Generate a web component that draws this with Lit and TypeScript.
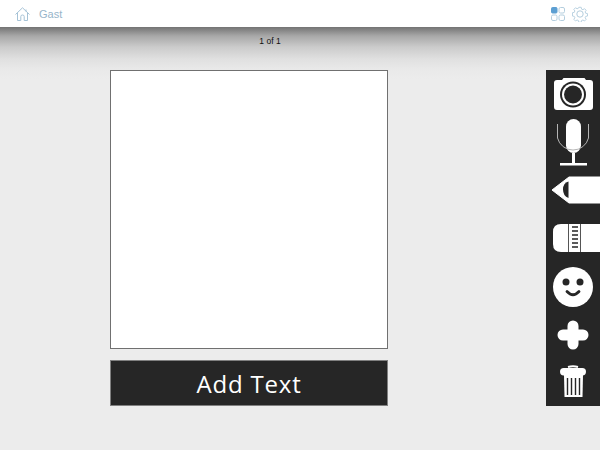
import { LitElement, html, css } from "lit";
import { customElement } from "lit/decorators.js";

@customElement("app-root")
export class AppRoot extends LitElement {
  static styles = css`
    :host { display: block; width: 600px; height: 450px; overflow: hidden; font-family: "Liberation Sans", Arial, sans-serif; }
    .page { width: 600px; height: 450px; display: flex; flex-direction: column; background: #ececec; }
    .header { height: 27px; flex: none; background: #fff; display: flex; align-items: center; padding: 0 12px 0 15px; box-sizing: border-box; }
    .header svg { display: block; flex: none; }
    .user { margin-left: 9px; font-size: 11px; color: #97b5ca; }
    .right { margin-left: auto; display: flex; gap: 7px; align-items: center; }
    .stage { flex: 1; background: linear-gradient(to bottom, #737373 0, #a8a8a8 9px, #cbcbcb 20px, #e0e0e0 32px, #e9e9e9 42px, #ececec 52px); }
    .count { width: 540px; height: 43px; box-sizing: border-box; padding-top: 9px; text-align: center; font-size: 8.5px; line-height: 11px; color: #111; }
    .row { display: flex; align-items: flex-start; padding-left: 110px; }
    .col { width: 278px; flex: none; display: flex; flex-direction: column; gap: 11px; }
    .canvas { height: 279px; background: #fff; border: 1px solid #707070; box-sizing: border-box; }
    .add { height: 46px; background: #262626; color: #fff; border: 1px solid #808080; box-sizing: border-box; display: flex; align-items: center; justify-content: center; font-family: "Open Sans", sans-serif; font-weight: 500; font-size: 24px; letter-spacing: 0.8px; }
    .tools { margin-left: auto; width: 54px; height: 336px; flex: none; background: #262626; display: flex; flex-direction: column; }
    .tools svg { display: block; width: 54px; flex: none; }
  `;

  render() {
    return html`
      <div class="page">
        <div class="header">
          <svg width="15" height="14" viewBox="0 0 15 14" fill="none" stroke="#a5c2d6" stroke-width="1">
            <path d="M0.5 7.5 7.5 0.8 14.5 7.5M2.5 6v7.5H5.8V9.500q0-1.500 1.700-1.500t1.700 1.500v4H12.500V6M11 2.500V4.500"/>
          </svg>
          <span class="user">Gast</span>
          <div class="right">
            <svg width="14" height="14" viewBox="0 0 14 14" fill="none" stroke="#b4cede" stroke-width="1">
              <rect x="0.5" y="0.5" width="5.500" height="5.500" rx="1" fill="#5c9fd2" stroke="#5c9fd2"/>
              <rect x="8" y="0.5" width="5.500" height="5.500" rx="1.500"/>
              <rect x="0.5" y="8" width="5.500" height="5.500" rx="1.500"/>
              <rect x="8" y="8" width="5.500" height="5.500" rx="1.500"/>
            </svg>
            <svg width="16" height="16" viewBox="0 0 16 16" fill="none" stroke="#b4cede" stroke-width="1">
              <path d="M6.700.7h2.600l.4 2 1.500.6 1.700-1.100 1.800 1.800-1.100 1.700.6 1.500 2 .4v2.600l-2 .4-.6 1.500 1.100 1.700-1.800 1.800-1.700-1.100-1.500.6-.4 1.900H6.700l-.4-1.900-1.500-.6-1.700 1.100-1.800-1.800 1.100-1.700-.6-1.500-2-.4V6.600l2-.4.6-1.500-1.100-1.700 1.800-1.800 1.700 1.100 1.500-.6z" transform="translate(8 8) scale(.92) translate(-8 -8)"/>
              <circle cx="8" cy="8" r="3.200"/>
            </svg>
          </div>
        </div>
        <div class="stage">
          <div class="count">1 of 1</div>
          <div class="row">
            <div class="col">
              <div class="canvas"></div>
              <div class="add">Add Text</div>
            </div>
            <div class="tools">
              <svg height="45" viewBox="546 70 54 45">
                <path d="M557 80h5l1.500-2h21l1.500 2h4q3 0 3 3v24q0 3-3 3h-33q-3 0-3-3V83q0-3 3-3z" fill="#fff"/>
                <circle cx="573" cy="94.500" r="13" fill="#262626"/>
                <circle cx="573" cy="94.500" r="11" fill="#fff"/>
                <circle cx="573" cy="94.500" r="9" fill="#262626"/>
              </svg>
              <svg height="55" viewBox="546 115 54 55">
                <rect x="566" y="119" width="15" height="34" rx="7.500" fill="#fff"/>
                <path d="M557.500 124v14a16 16 0 0 0 31 0v-14" fill="none" stroke="#b5b5b5" stroke-width="1"/>
                <path d="M572 153h3v10h12v2.500h-27V163h12z" fill="#fff"/>
              </svg>
              <svg height="45" viewBox="546 170 54 45">
                <path d="M600 177h-31l-17 13 17 13h31z" fill="#fff" stroke="#fff" stroke-linejoin="round"/>
                <path d="M568.500 181.500v16.500q-5.500-2-5.500-8.500t5.500-8z" fill="#262626"/>
              </svg>
              <svg height="45" viewBox="546 215 54 45">
                <path d="M600 224h-39q-8 0-8 8v12q0 8 8 8h39z" fill="#fff"/>
                <path d="M568.500 224v28M580.500 224v28" stroke="#555" stroke-width="1"/>
                <path d="M572 227h6M572 231h6M572 235h6M572 239h6M572 243h6M572 247h6" stroke="#262626" stroke-width="1.700"/>
              </svg>
              <svg height="55" viewBox="546 260 54 55">
                <circle cx="573" cy="287" r="20" fill="#fff"/>
                <circle cx="566" cy="282" r="3.500" fill="#262626"/>
                <circle cx="580" cy="282" r="3.500" fill="#262626"/>
                <path d="M567 291.500q6 6.500 12 0" fill="none" stroke="#262626" stroke-width="2.800" stroke-linecap="round"/>
              </svg>
              <svg height="45" viewBox="546 315 54 45">
                <path d="M563 335h20M573 326v18" stroke="#fff" stroke-width="11" stroke-linecap="round" fill="none"/>
              </svg>
              <svg height="46" viewBox="546 360 54 46">
                <path d="M568 367q5-1.500 10 0" stroke="#fff" stroke-width="2" fill="none"/>
                <rect x="560" y="368" width="26" height="7.500" rx="3.700" fill="#fff"/>
                <path d="M564 375h19l-.5 22h-18z" fill="#fff"/>
                <path d="M567.500 378v17M571.500 378v17M575.500 378v17M579.500 378v17" stroke="#262626" stroke-width="1.400"/>
              </svg>
            </div>
          </div>
        </div>
      </div>
    `;
  }
}
